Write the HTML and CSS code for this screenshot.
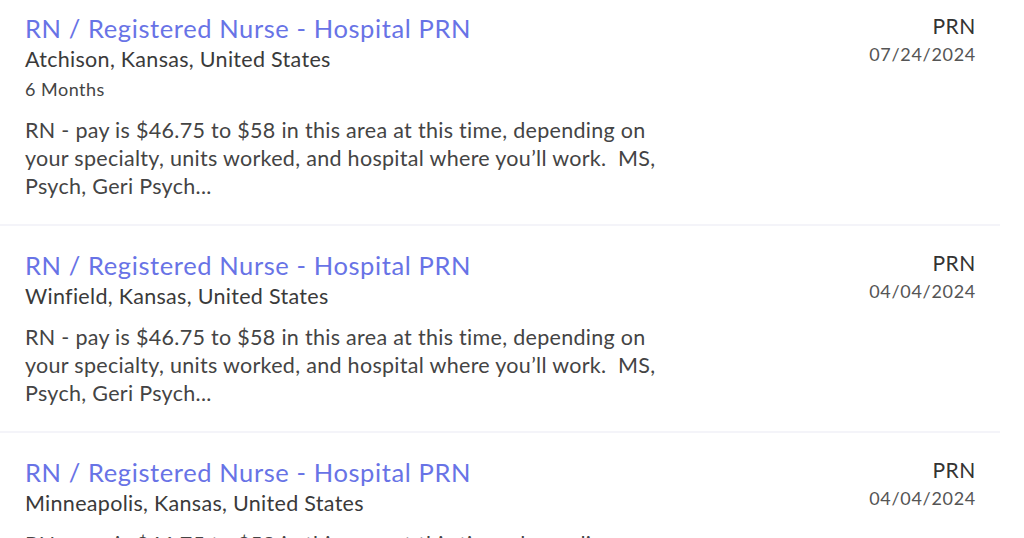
FILE: index.html
```html
<!DOCTYPE html>
<html>
<head>
<meta charset="utf-8">
<link rel="stylesheet" href="styles.css">
</head>
<body>
<div class="list">
  <div class="job">
    <div class="main">
      <a class="title" href="#">RN / Registered Nurse - Hospital PRN</a>
      <div class="loc">Atchison, Kansas, United States</div>
      <div class="dur">6 Months</div>
      <p class="desc">RN - pay is $46.75 to $58 in this area at this time, depending on your specialty, units worked, and hospital where you’ll work.&nbsp; MS, Psych, Geri Psych...</p>
    </div>
    <div class="meta">
      <div class="type">PRN</div>
      <div class="date">07/24/2024</div>
    </div>
  </div>
  <div class="job">
    <div class="main">
      <a class="title" href="#">RN / Registered Nurse - Hospital PRN</a>
      <div class="loc">Winfield, Kansas, United States</div>
      <p class="desc">RN - pay is $46.75 to $58 in this area at this time, depending on your specialty, units worked, and hospital where you’ll work.&nbsp; MS, Psych, Geri Psych...</p>
    </div>
    <div class="meta">
      <div class="type">PRN</div>
      <div class="date">04/04/2024</div>
    </div>
  </div>
  <div class="job">
    <div class="main">
      <a class="title" href="#">RN / Registered Nurse - Hospital PRN</a>
      <div class="loc">Minneapolis, Kansas, United States</div>
      <p class="desc">RN - pay is $46.75 to $58 in this area at this time, depending on your specialty, units worked, and hospital where you’ll work.&nbsp; MS, Psych, Geri Psych...</p>
    </div>
    <div class="meta">
      <div class="type">PRN</div>
      <div class="date">04/04/2024</div>
    </div>
  </div>
</div>
</body>
</html>
```

FILE: styles.css
```css
html, body {
  margin: 0;
  padding: 0;
  background: #ffffff;
}
body {
  font-family: Lato, "Noto Sans", sans-serif;
  color: #333;
}
.list {
  width: 1000px;
}
.job {
  display: flex;
  justify-content: space-between;
  padding: 12px 24px 24px 25px;
  border-bottom: 2px solid #f4f4f9;
}
.job + .job {
  padding-top: 23px;
}
.main {
  display: flex;
  flex-direction: column;
  align-items: flex-start;
}
.title {
  font-size: 25.5px;
  line-height: 32px;
  letter-spacing: 0.6px;
  color: #6873e6;
  text-decoration: none;
}
.loc {
  font-size: 21.5px;
  line-height: 30px;
  letter-spacing: 0.3px;
  color: #3a3a3a;
}
.dur {
  font-size: 18px;
  line-height: 30px;
  letter-spacing: 0.5px;
  color: #444;
}
.desc {
  margin: 12px 0 0 0;
  width: 665px;
  font-size: 21.5px;
  line-height: 28px;
  letter-spacing: 0.3px;
  color: #444;
}
.meta {
  text-align: right;
}
.type {
  font-size: 21px;
  line-height: 28px;
  letter-spacing: 0.6px;
  color: #333;
}
.date {
  font-size: 18px;
  line-height: 28px;
  letter-spacing: 0.7px;
  color: #555;
}
```
